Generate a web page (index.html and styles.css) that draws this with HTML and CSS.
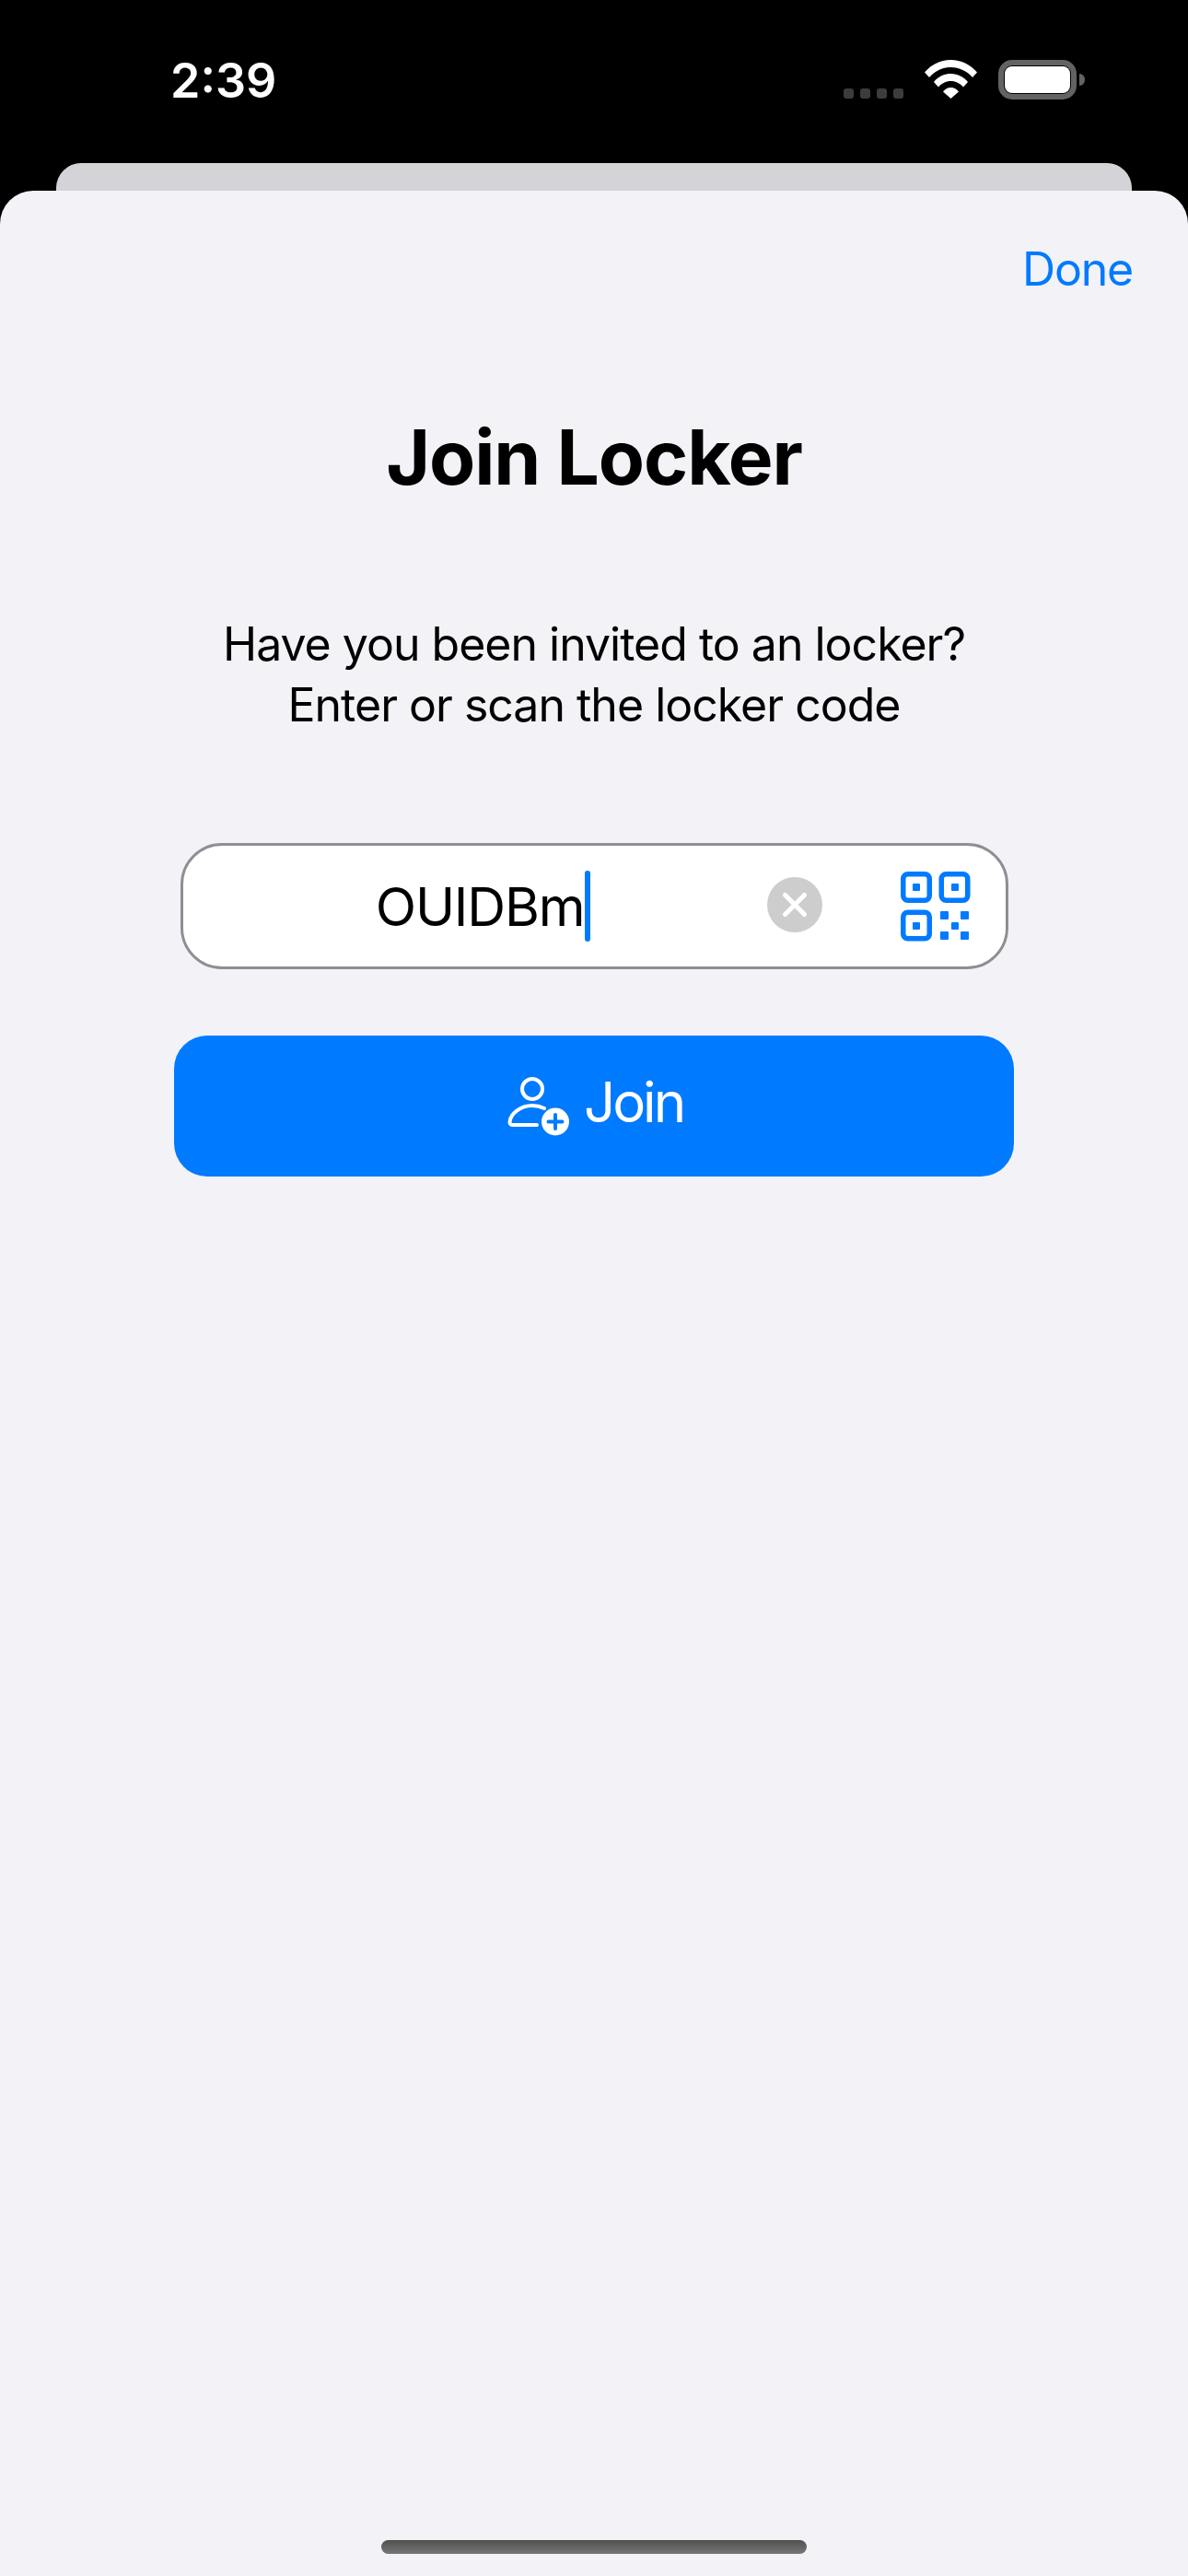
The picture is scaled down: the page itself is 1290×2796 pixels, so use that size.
FILE: index.html
```html
<!DOCTYPE html>
<html lang="en">
<head>
    <meta charset="UTF-8">
    <title>Join Locker</title>
    <link rel="stylesheet" href="styles.css">
</head>
<body>
    <div class="status-bar">
        <span class="clock">2:39</span>
        <div class="status-icons">
            <div class="signal"><i></i><i></i><i></i><i></i></div>
            <svg class="wifi" width="57" height="42" viewBox="0 0 57 42">
                <path d="M0 13.500C7.500 5 17.500 0 28.500 0S49.500 5 57 13.500L52 19C46 12 37.500 8 28.500 8S11 12 5 19Z" fill="#fff"/>
                <path d="M10 24C14.500 18.500 21 15 28.500 15S42.500 18.500 47 24L42 29.500C38.500 25.500 33.800 23 28.500 23S18.500 25.500 15 29.500Z" fill="#fff"/>
                <path d="M20 34.500C22 31.800 25 30 28.500 30S35 31.800 37 34.500L28.500 42Z" fill="#fff"/>
            </svg>
            <div class="battery"><div class="battery-level"></div></div>
        </div>
    </div>

    <div class="back-sheet"></div>

    <div class="sheet">
        <div class="sheet-nav">
            <span class="done">Done</span>
        </div>

        <h1>Join Locker</h1>
        <p class="intro">Have you been invited to an locker?<br>Enter or scan the locker code</p>

        <div class="code-field">
            <div class="code-value"><span>OUIDBm</span><i class="caret"></i></div>
            <svg class="clear" width="60" height="60" viewBox="0 0 60 60">
                <circle cx="30" cy="30" r="30" fill="#cdcdcd"/>
                <path d="M19.500 19.500L40.500 40.500M40.500 19.500L19.500 40.500" stroke="#fff" stroke-width="5" stroke-linecap="round"/>
            </svg>
            <svg class="qr" width="76" height="76" viewBox="0 0 76 76" fill="#007aff">
                <g fill="none" stroke="#007aff" stroke-width="5.500">
                    <rect x="2.750" y="2.750" width="28.500" height="28.500" rx="5"/>
                    <rect x="44.250" y="2.750" width="28.500" height="28.500" rx="5"/>
                    <rect x="2.750" y="44.250" width="28.500" height="28.500" rx="5"/>
                </g>
                <rect x="13" y="13" width="8" height="8" rx="1"/>
                <rect x="55" y="13" width="8" height="8" rx="1"/>
                <rect x="13" y="55" width="8" height="8" rx="1"/>
                <rect x="43" y="43" width="9" height="9" rx="1"/>
                <rect x="65" y="43" width="9" height="9" rx="1"/>
                <rect x="55" y="55" width="8" height="8" rx="1"/>
                <rect x="43" y="65" width="9" height="9" rx="1"/>
                <rect x="65" y="65" width="9" height="9" rx="1"/>
            </svg>
        </div>

        <button class="join-button">
            <svg width="68" height="66" viewBox="0 0 68 66">
                <circle cx="27" cy="14" r="11" fill="none" stroke="#fff" stroke-width="4"/>
                <path d="M40 35C36 33 31.500 32 27 32C14 32 3 41 2.500 50C2.400 52 3.500 53 6 53H32" fill="none" stroke="#fff" stroke-width="4" stroke-linecap="round"/>
                <circle cx="52" cy="49.500" r="15" fill="#fff"/>
                <path d="M52 42V57M44.500 49.500H59.500" stroke="#007aff" stroke-width="4" stroke-linecap="round"/>
            </svg>
            <span>Join</span>
        </button>

        <div class="home-indicator"></div>
    </div>
</body>
</html>
```

FILE: styles.css
```css
* {
    box-sizing: border-box;
}

html, body {
    margin: 0;
    height: 2796px;
}

body {
    background: #000;
    font-family: Inter, "Liberation Sans", sans-serif;
    color: #000;
    overflow: hidden;
}

.status-bar {
    height: 177px;
    padding: 62px 121px 0 185px;
    display: flex;
    justify-content: space-between;
    align-items: flex-start;
}

.clock {
    color: #fff;
    font-size: 52px;
    font-weight: 600;
    line-height: 52px;
}

.status-icons {
    display: flex;
    align-items: flex-end;
    margin-top: 3px;
}

.signal {
    display: flex;
    gap: 7px;
    margin: 0 23px 1px 0;
}

.signal i {
    width: 11px;
    height: 11px;
    border-radius: 3px;
    background: #3c3c3c;
}

.wifi {
    margin: 0 23px 1px 0;
}

.battery {
    position: relative;
    width: 85px;
    height: 43px;
    padding: 1px;
    border: 6px solid #636363;
    border-radius: 15px;
}

.battery::after {
    content: "";
    position: absolute;
    right: -15px;
    top: 9px;
    width: 6px;
    height: 13px;
    border-radius: 0 6px 6px 0;
    background: #636363;
}

.battery-level {
    width: 100%;
    height: 100%;
    background: #fff;
    border-radius: 8px;
}

.back-sheet {
    height: 30px;
    margin: 0 61px;
    background: #d4d4d8;
    border-radius: 27px 27px 0 0;
}

.sheet {
    position: relative;
    height: 2589px;
    background: #f2f2f7;
    border-radius: 36px 36px 0 0;
    display: flex;
    flex-direction: column;
    align-items: center;
}

.sheet-nav {
    width: 100%;
    padding: 60px 60px 0 0;
    display: flex;
    justify-content: flex-end;
}

.done {
    color: #007aff;
    font-size: 50px;
    line-height: 50px;
    letter-spacing: -1.2px;
}

h1 {
    margin: 130px 0 0;
    font-size: 82px;
    font-weight: 700;
    line-height: 100px;
    letter-spacing: -1.100px;
}

.intro {
    margin: 119px 0 0;
    font-size: 50px;
    line-height: 66px;
    letter-spacing: -1px;
    text-align: center;
}

.code-field {
    position: relative;
    width: 899px;
    height: 137px;
    margin-top: 117px;
    background: #fff;
    border: 3px solid #8e8e93;
    border-radius: 45px;
    display: flex;
    align-items: center;
}

.code-value {
    width: 100%;
    padding-right: 241px;
    display: flex;
    justify-content: center;
    align-items: center;
    font-size: 58px;
    letter-spacing: -1.2px;
}

.caret {
    width: 6px;
    height: 77px;
    margin-left: 1px;
    border-radius: 3px;
    background: #007aff;
}

.clear {
    position: absolute;
    left: 634px;
    top: 34px;
}

.qr {
    position: absolute;
    left: 779px;
    top: 28px;
}

.join-button {
    width: 912px;
    height: 153px;
    margin-top: 72px;
    padding: 0 0 0 3px;
    border: none;
    border-radius: 36px;
    background: #007aff;
    color: #fff;
    font-family: inherit;
    font-size: 60px;
    letter-spacing: -3px;
    display: flex;
    justify-content: center;
    align-items: center;
    gap: 15px;
}

.join-button span {
    margin-bottom: 9px;
}

.home-indicator {
    position: absolute;
    left: 414px;
    bottom: 24px;
    width: 462px;
    height: 15px;
    border-radius: 8px;
    background: linear-gradient(#505050, #777);
}
```
